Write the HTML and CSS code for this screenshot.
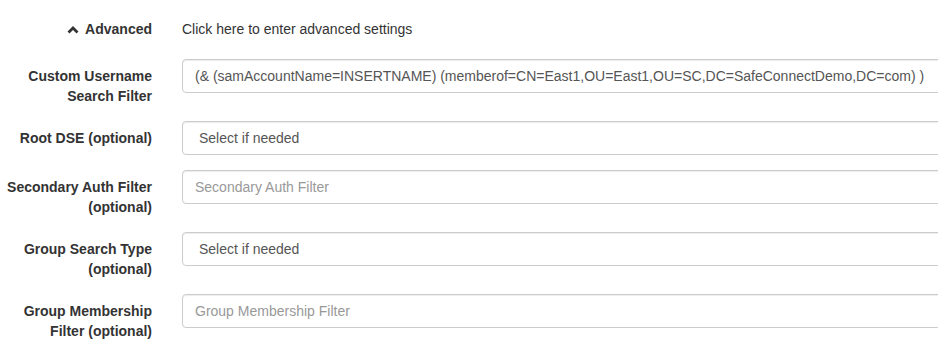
FILE: index.html
```html
<!DOCTYPE html>
<html lang="en">
<head>
    <meta charset="UTF-8">
    <title>Advanced settings</title>
    <link rel="stylesheet" href="styles.css">
</head>
<body>
    <form class="form-horizontal">
        <div class="form-group advanced">
            <label class="control-label">
                <svg class="chevron" width="12" height="9" viewBox="0 0 12 9"><polyline points="1.5,7.5 6,3 10.5,7.5" fill="none" stroke="#333" stroke-width="2.8"/></svg>
                Advanced
            </label>
            <div class="control-static">Click here to enter advanced settings</div>
        </div>

        <div class="form-group">
            <label class="control-label">Custom Username Search Filter</label>
            <div><input class="form-control" type="text" value="(&amp; (samAccountName=INSERTNAME) (memberof=CN=East1,OU=East1,OU=SC,DC=SafeConnectDemo,DC=com) )"></div>
        </div>

        <div class="form-group">
            <label class="control-label">Root DSE (optional)</label>
            <div><select class="form-control select"><option>Select if needed</option></select></div>
        </div>

        <div class="form-group">
            <label class="control-label">Secondary Auth Filter (optional)</label>
            <div><input class="form-control" type="text" placeholder="Secondary Auth Filter"></div>
        </div>

        <div class="form-group">
            <label class="control-label">Group Search Type (optional)</label>
            <div><select class="form-control select"><option>Select if needed</option></select></div>
        </div>

        <div class="form-group">
            <label class="control-label">Group Membership Filter (optional)</label>
            <div><input class="form-control" type="text" placeholder="Group Membership Filter"></div>
        </div>
    </form>
</body>
</html>
```

FILE: styles.css
```css
body {
    margin: 0;
    background: #fff;
    font-family: "Liberation Sans", Arial, sans-serif;
    font-size: 14px;
    line-height: 20px;
    color: #333;
    overflow: hidden;
}

.form-horizontal {
    width: 1000px;
    padding-top: 12px;
}

.form-group {
    display: grid;
    grid-template-columns: 152px 1fr;
    column-gap: 30px;
    align-items: start;
    margin-bottom: 15px;
}

.form-group.advanced {
    margin-bottom: 13px;
    min-height: 34px;
}

.control-label {
    padding-top: 7px;
    text-align: right;
    font-weight: bold;
}

.chevron {
    margin-right: 3px;
    vertical-align: 0;
}

.control-static {
    padding-top: 7px;
}

.form-control {
    display: block;
    box-sizing: border-box;
    width: 100%;
    height: 34px;
    padding: 6px 12px;
    font-family: inherit;
    font-size: 14px;
    line-height: 20px;
    color: #555;
    background: #fff;
    border: 1px solid #ccc;
    border-radius: 4px;
    box-shadow: inset 0 1px 1px rgba(0, 0, 0, 0.075);
    outline: none;
}

.form-control::placeholder {
    color: #999;
}

.select {
    -webkit-appearance: none;
    appearance: none;
    padding-left: 16px;
}
```
